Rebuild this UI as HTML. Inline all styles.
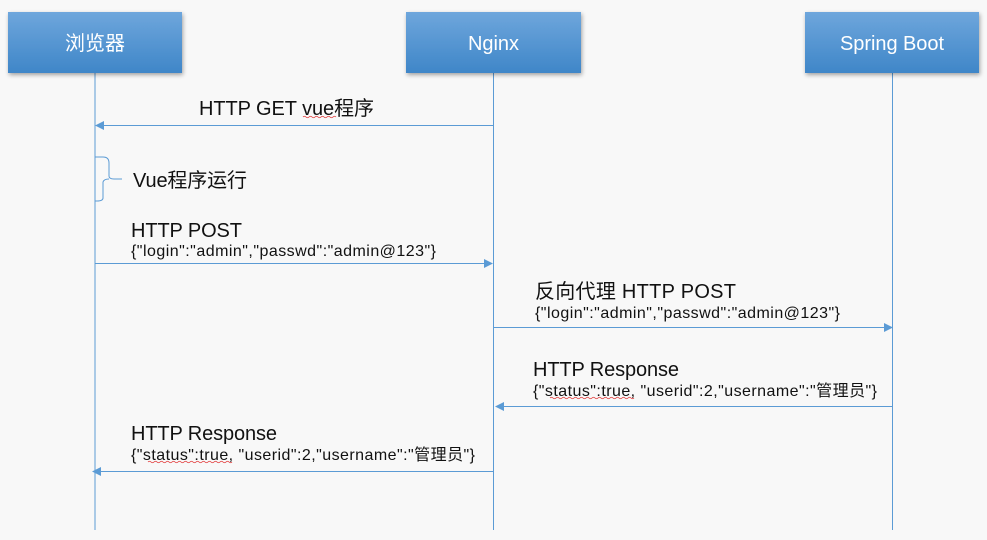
<!DOCTYPE html>
<html><head><meta charset="utf-8"><style>
html,body{margin:0;padding:0;background:#f8f8f8;}
svg{display:block;}
text{font-family:"Liberation Sans","Noto Sans CJK SC",sans-serif;fill:#111;}
</style></head><body>
<svg width="987" height="540" viewBox="0 0 987 540" xmlns="http://www.w3.org/2000/svg">
<defs>
<linearGradient id="g" x1="0" y1="0" x2="0" y2="1">
<stop offset="0" stop-color="#6ea6dc"/><stop offset="1" stop-color="#3f86c8"/>
</linearGradient>
<filter id="s" x="-10%" y="-20%" width="130%" height="150%"><feDropShadow dx="1" dy="2" stdDeviation="2" flood-color="#000" flood-opacity="0.35"/></filter>
</defs>
<rect width="987" height="540" fill="#f8f8f8"/>
<g stroke="#5b9bd5" stroke-width="1">
<line x1="95" y1="72" x2="95" y2="530"/>
<line x1="493.5" y1="72" x2="493.5" y2="530"/>
<line x1="892.5" y1="72" x2="892.5" y2="530"/>
<line x1="100" y1="125.5" x2="493" y2="125.5"/>
<line x1="95" y1="263.5" x2="488" y2="263.5"/>
<line x1="493" y1="327.5" x2="887" y2="327.5"/>
<line x1="500" y1="406.5" x2="892" y2="406.5"/>
<line x1="100" y1="471.5" x2="493" y2="471.5"/>
<path d="M95 157 h8 q6 0 6 6 v13 q0 3 5 3 h8 M109 179 q-5 0 -6 3 v16 q0 3 -6 3 h-2" fill="none"/>
</g>
<g fill="#5b9bd5">
<path d="M95 125.5 l9 -4.5 v9 z"/>
<path d="M493 263.5 l-9 -4.5 v9 z"/>
<path d="M893 327.5 l-9 -4.5 v9 z"/>
<path d="M495 406.5 l9 -4.5 v9 z"/>
<path d="M92 471.5 l9 -4.5 v9 z"/>
</g>
<g filter="url(#s)">
<rect x="8" y="12" width="174" height="61" fill="url(#g)"/>
<rect x="406" y="12" width="175" height="61" fill="url(#g)"/>
<rect x="805" y="12" width="174" height="61" fill="url(#g)"/>
</g>
<g font-size="20" style="fill:#fff">
<text x="65" y="50" textLength="60" style="fill:#fff">浏览器</text>
<text x="468" y="50" textLength="51" style="fill:#fff">Nginx</text>
<text x="840" y="50" textLength="104" style="fill:#fff">Spring Boot</text>
</g>
<g fill="none" stroke="#e03030" stroke-width="0.8">
<path d="M303 117 q1.5 -1.5 3 0 t3 0 t3 0 t3 0 t3 0 t3 0 t3 0 t3 0 t3 0 t3 0 t3 0"/>
<path d="M550 398 q1.5 -1.5 3 0 t3 0 t3 0 t3 0 t3 0 t3 0 t3 0 t3 0 t3 0 t3 0 t3 0 t3 0 t3 0 t3 0 t3 0 t3 0 t3 0 t3 0 t3 0 t3 0 t3 0 t3 0 t3 0 t3 0 t3 0 t3 0 t3 0 t3 0"/>
<path d="M148 462 q1.5 -1.5 3 0 t3 0 t3 0 t3 0 t3 0 t3 0 t3 0 t3 0 t3 0 t3 0 t3 0 t3 0 t3 0 t3 0 t3 0 t3 0 t3 0 t3 0 t3 0 t3 0 t3 0 t3 0 t3 0 t3 0 t3 0 t3 0 t3 0 t3 0"/>
</g>
<text x="199" y="115" font-size="20" textLength="175">HTTP GET vue程序</text>
<text x="133" y="187" font-size="20" textLength="114">Vue程序运行</text>
<text x="131" y="237" font-size="20" textLength="111">HTTP POST</text>
<text x="131" y="256" font-size="16" textLength="305">{"login":"admin","passwd":"admin@123"}</text>
<text x="535" y="298" font-size="20" textLength="201">反向代理 HTTP POST</text>
<text x="535" y="318" font-size="16" textLength="305">{"login":"admin","passwd":"admin@123"}</text>
<text x="533" y="376" font-size="20" textLength="146">HTTP Response</text>
<text x="533" y="396" font-size="16" textLength="344">{"status":true, "userid":2,"username":"管理员"}</text>
<text x="131" y="440" font-size="20" textLength="146">HTTP Response</text>
<text x="131" y="460" font-size="16" textLength="344">{"status":true, "userid":2,"username":"管理员"}</text>
</svg>
</body></html>
